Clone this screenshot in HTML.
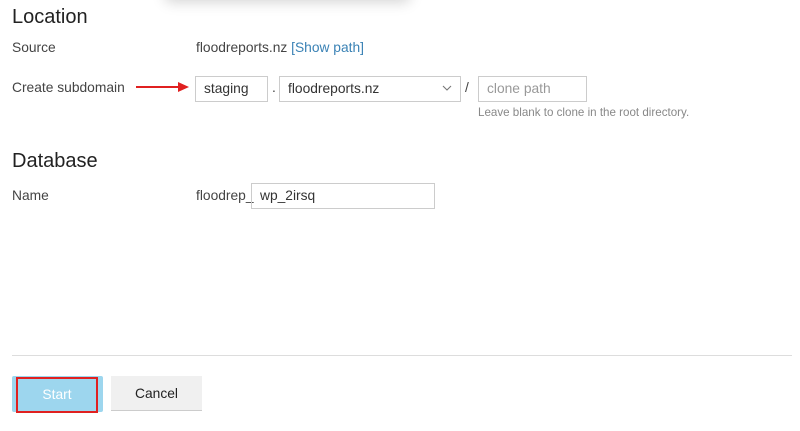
<!DOCTYPE html>
<html><head><style>
body{margin:0;width:800px;height:431px;background:#fff;font-family:"Liberation Sans",sans-serif;color:#333;position:relative;overflow:hidden}
.a{position:absolute;white-space:nowrap}
h2{margin:0;font-weight:normal;font-size:20px;color:#222;position:absolute}
.l{font-size:13.8px;color:#444}
.in{position:absolute;border:1px solid #ccc;box-sizing:border-box;height:26px;font-size:13.8px;line-height:24px;padding-left:8px;color:#333}
</style></head><body>
<div class="a" style="left:165px;top:-20px;width:245px;height:20px;box-shadow:0 2px 14px rgba(0,0,0,.18);border-radius:6px"></div>
<h2 style="left:12px;top:6px">Location</h2>
<div class="a l" style="left:12px;top:40px">Source</div>
<div class="a l" style="left:196px;top:40px">floodreports.nz <span style="color:#3a82b5">[Show path]</span></div>
<div class="a l" style="left:12px;top:80px">Create subdomain</div>
<svg class="a" style="left:136px;top:81px" width="54" height="12"><line x1="0" y1="6" x2="44" y2="6" stroke="#e02020" stroke-width="2"/><polygon points="42,1 53,6 42,11" fill="#e02020"/></svg>
<div class="in" style="left:195px;top:76px;width:73px">staging</div>
<div class="a l" style="left:272px;top:80px">.</div>
<div class="in" style="left:279px;top:76px;width:182px">floodreports.nz</div>
<svg class="a" style="left:442px;top:85px" width="10" height="7"><path d="M1 1 L5 5 L9 1" fill="none" stroke="#777" stroke-width="1.1"/></svg>
<div class="a l" style="left:465px;top:80px">/</div>
<div class="in" style="left:478px;top:76px;width:109px;color:#999">clone path</div>
<div class="a" style="left:478px;top:106px;font-size:11.6px;color:#888">Leave blank to clone in the root directory.</div>
<h2 style="left:12px;top:150px">Database</h2>
<div class="a l" style="left:12px;top:188px">Name</div>
<div class="a l" style="left:196px;top:188px">floodrep_</div>
<div class="in" style="left:251px;top:183px;width:184px">wp_2irsq</div>
<div class="a" style="left:12px;top:355px;width:780px;height:1px;background:#ddd"></div>
<div class="a" style="left:12px;top:376px;width:91px;height:36px;background:#9dd6ee;border-radius:2px"></div>
<div class="a" style="left:16px;top:377px;width:82px;height:36px;border:2px solid #e02020;box-sizing:border-box;color:#fff;font-size:13.8px;text-align:center;line-height:32px">Start</div>
<div class="a" style="left:111px;top:376px;width:91px;height:35px;background:#f0f0f0;border-bottom:1px solid #ccc;box-sizing:border-box;font-size:13.8px;text-align:center;line-height:35px;color:#222">Cancel</div>
</body></html>
